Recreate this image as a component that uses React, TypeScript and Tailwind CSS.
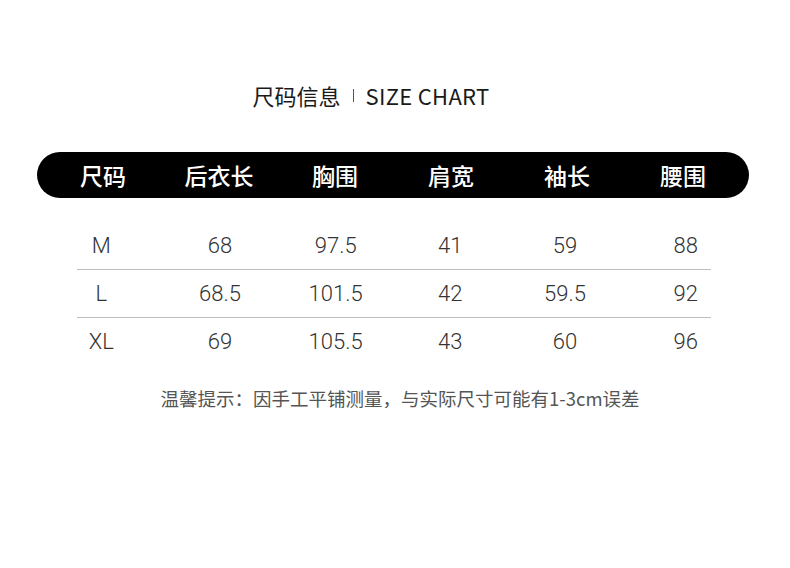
const headers = ["尺码", "后衣长", "胸围", "肩宽", "袖长", "腰围"];

const rows = [
  ["M", "68", "97.5", "41", "59", "88"],
  ["L", "68.5", "101.5", "42", "59.5", "92"],
  ["XL", "69", "105.5", "43", "60", "96"],
];

// small per-column nudges so the numbers sit where the chart has them
const colPad = ["", "pl-[4px]", "pl-[2px]", "pr-[2px]", "pr-[6px]", "pl-[2px]"];

const cjk = { fontFamily: '"Noto Sans CJK SC", "Noto Sans", sans-serif' };

export default function App() {
  return (
    <div className="w-[790px] h-[568px] bg-white flex flex-col items-center" style={cjk}>
      <div className="mt-[80px] mr-[48px] h-[30px] flex items-center text-[22px] text-[#1a1a1a]">
        <span>尺码信息</span>
        <span className="mx-[12px] w-px h-[13px] bg-[#555]" />
        <span className="tracking-[0.3px]">SIZE CHART</span>
      </div>

      <div className="mt-[42px] mr-[4px] w-[712px] h-[46px] rounded-full bg-black px-[8px] grid grid-cols-6 items-center">
        {headers.map((h) => (
          <div key={h} className="text-center text-white text-[23px] font-medium leading-none">
            {h}
          </div>
        ))}
      </div>

      <div className="mt-[24px] w-[700px] ml-[-4px]" style={{ fontFamily: "Roboto, sans-serif" }}>
        {rows.map((r, i) => (
          <div key={r[0]}>
            {i > 0 && <div className="ml-[34px] mr-[32px] h-px bg-[#bdbdbd]" />}
            <div className="h-[47px] grid grid-cols-6 items-center text-[22px] font-light text-[#333]">
              {r.map((c, j) => (
                <div key={j} className={"text-center " + colPad[j]}>
                  {c}
                </div>
              ))}
            </div>
          </div>
        ))}
      </div>

      <div className="mt-[24px] ml-[10px] text-[18.5px] text-[#555] leading-none">
        温馨提示：因手工平铺测量，与实际尺寸可能有1-3cm误差
      </div>
    </div>
  );
}
